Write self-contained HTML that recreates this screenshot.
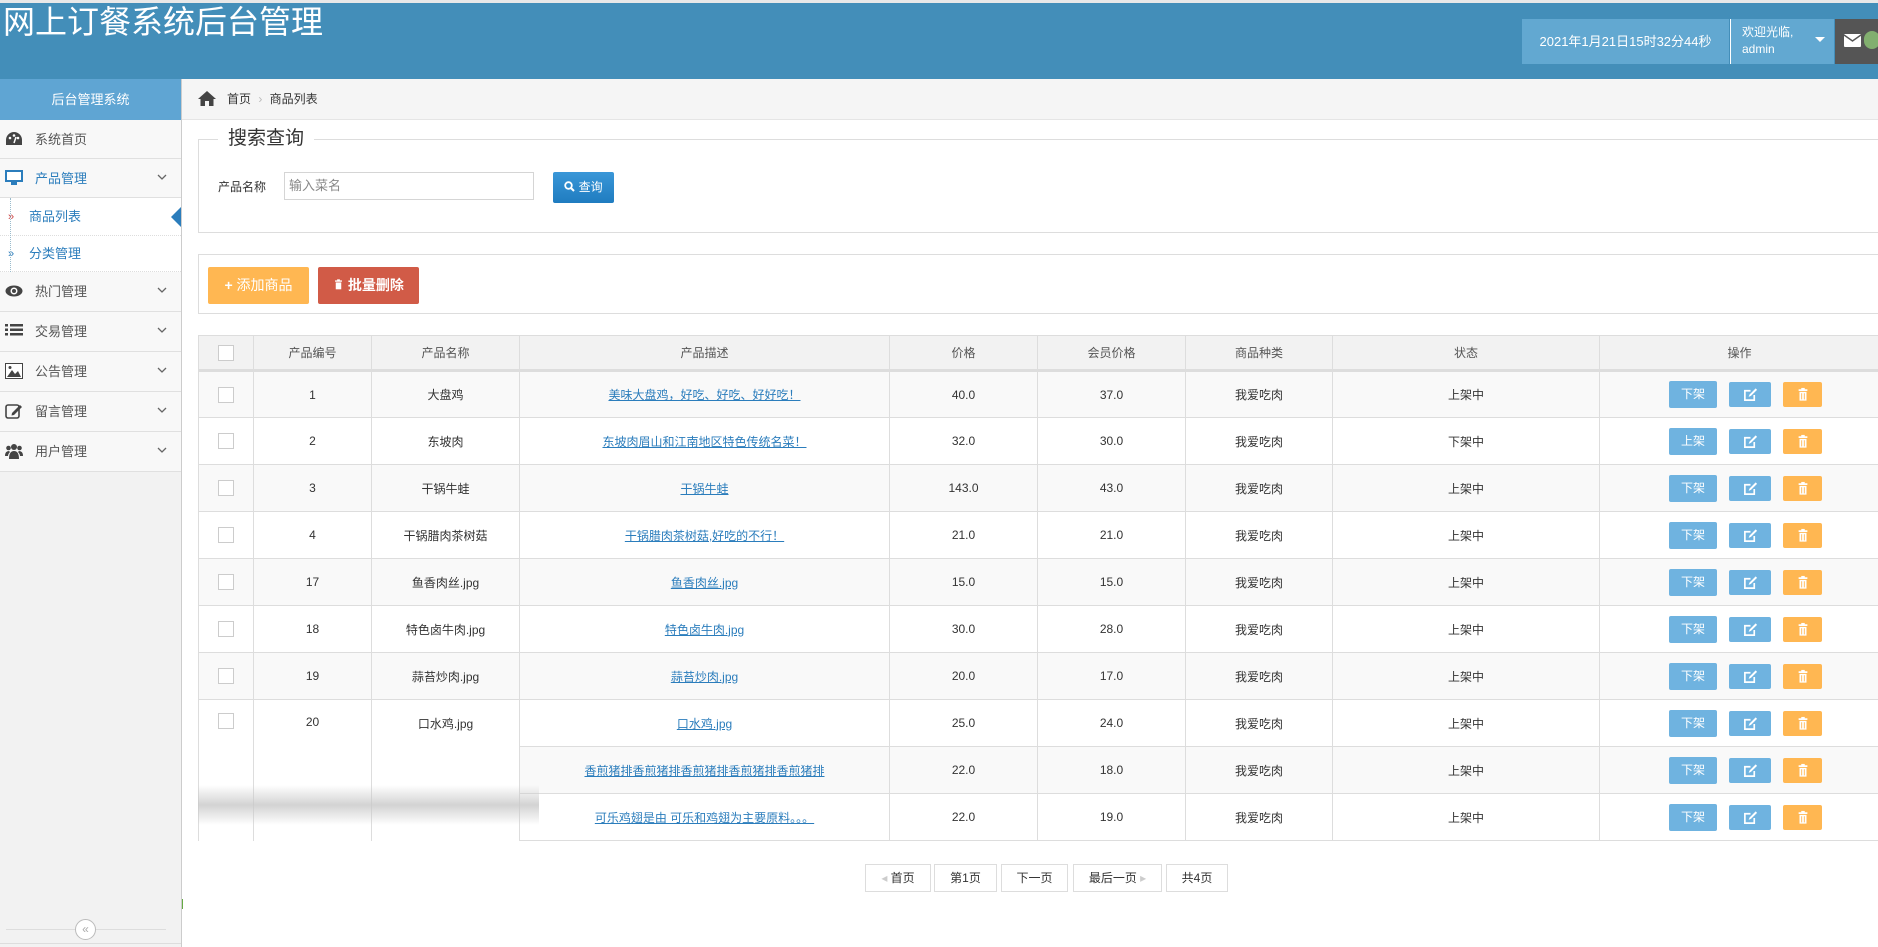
<!DOCTYPE html>
<html><head><meta charset="utf-8">
<style>
*{margin:0;padding:0;box-sizing:border-box}
body{width:1878px;height:947px;overflow:hidden;background:#fff;font-family:"Liberation Sans","Noto Sans CJK SC",sans-serif;font-size:13px;color:#333;position:relative}
.a{position:absolute}
#hd{left:0;top:0;width:1878px;height:79px;background:#438eb9;border-top:3px solid #e8e8e8}
#title{left:3px;top:2px;color:#fff;font-size:32px;line-height:40px}
#side{left:0;top:79px;width:182px;height:868px;background:#f2f2f2;border-right:1px solid #ccc}
.mi{position:absolute;left:0;width:181px;height:40px;background:#f8f8f8;border-bottom:1px solid #e0e0e0;font-size:13px;line-height:39px;padding-left:35px;color:#555}
.mi .ic{position:absolute;left:5px;top:11px;width:18px;height:16px}
.mi .ch{position:absolute;left:157px;top:15px;width:10px;height:7px}
.sub{position:absolute;left:0;width:181px;background:#fff;border-bottom:1px dotted #ddd;color:#2b7dbc;padding-left:29px;font-size:13px}
.sub b{position:absolute;left:8px;font-weight:normal;font-size:11px}
th,td{border:1px solid #ddd;text-align:center;font-weight:normal}
table{border-collapse:collapse;position:absolute;left:198px;top:335px;width:1681px;table-layout:fixed}
th{height:35px;background:#f2f2f2;color:#555;font-size:12px;border-bottom:3px solid #ddd}
td{height:47px;font-size:12px;color:#333}
td.op{padding-left:12px}
tr.o td{background:#f9f9f9}
td a{color:#2b7dbc;text-decoration:underline}
.cb{display:inline-block;width:16px;height:16px;border:1px solid #ccc;background:#fff;vertical-align:middle}
.btn{display:inline-block;height:27px;line-height:27px;color:#fff;font-size:12px;border-radius:2px;vertical-align:middle}
.b1{width:48px;background:#6fb3e0;margin-right:12px}
.b2{width:42px;height:25px;background:#6fb3e0;margin-right:12px;padding-top:5px;line-height:0}
.b3{width:39px;height:25px;background:#ffb752;padding-top:5px;line-height:0}
.pg{position:absolute;top:864px;height:28px;border:1px solid #ddd;font-size:12px;line-height:26px;text-align:center;color:#333}
</style></head><body>
<svg width="0" height="0" style="position:absolute"><defs>
<symbol id="ed" viewBox="0 0 16 16"><path d="M12 8.5V14H2V4h6" fill="none" stroke="#fff" stroke-width="1.8"/><path d="M6 10.5 L7 8 L13.5 1.5 L15 3 L8.5 9.5z" fill="#fff"/></symbol>
<symbol id="tr" viewBox="0 0 16 16"><rect x="3" y="2" width="10" height="2" fill="#fff"/><rect x="6" y="0.5" width="4" height="2" fill="#fff"/><path d="M4 5h8v10H4z" fill="#fff"/><path d="M6.5 6.5v7M9.5 6.5v7" stroke="#ffb752" stroke-width="1"/></symbol>
<symbol id="cv" viewBox="0 0 10 7"><path d="M1 1 L5 5 L9 1" fill="none" stroke="#666" stroke-width="1.3"/></symbol>
</defs></svg>
<div id="hd" class="a"></div>
<div id="title" class="a">网上订餐系统后台管理</div>
<div class="a" style="left:1522px;top:19px;width:207px;height:45px;background:#62a8d1;color:#fff;font-size:13px;line-height:45px;text-align:center">2021年1月21日15时32分44秒</div>
<div class="a" style="left:1730px;top:19px;width:104px;height:45px;background:#62a8d1;border-left:1px solid #fff;color:#fff;font-size:12px;padding:5px 0 0 11px;line-height:17px">欢迎光临,<br>admin<span class="a" style="left:84px;top:18px;border:5px solid transparent;border-top-color:#fff"></span></div>
<div class="a" style="left:1835px;top:19px;width:43px;height:45px;background:#555"><svg class="a" style="left:9px;top:15px" width="17" height="13"><rect width="17" height="13" rx="1" fill="#fff"/><path d="M0 1 L8.5 7 L17 1" stroke="#555" stroke-width="1.5" fill="none"/></svg><div class="a" style="left:29px;top:12px;width:16px;height:18px;border-radius:9px;background:#82af6f"></div></div>

<div id="side" class="a">
<div class="a" style="left:0;top:0;width:181px;height:41px;background:#5fa5d3;color:#fff;text-align:center;line-height:41px;font-size:13px">后台管理系统</div>
<div class="mi" style="top:41px;height:39px"><svg class="ic" viewBox="0 0 18 16"><path d="M9 1A8 8 0 0 0 1 9v5h16V9A8 8 0 0 0 9 1z" fill="#444"/><circle cx="5" cy="7" r="1.3" fill="#fff"/><circle cx="9" cy="4.5" r="1.3" fill="#fff"/><circle cx="13" cy="7" r="1.3" fill="#fff"/><path d="M9 12 L11 6" stroke="#fff" stroke-width="1.5"/></svg>系统首页</div>
<div class="mi" style="top:80px;height:39px;color:#2b7dbc"><svg class="ic" viewBox="0 0 18 16"><rect x="0" y="0" width="18" height="12" fill="#2b7dbc"/><rect x="2" y="2" width="14" height="8" fill="#fff"/><rect x="6" y="12" width="6" height="3" fill="#2b7dbc"/></svg>产品管理<svg class="ch"><use href="#cv"/></svg></div>
<div class="sub" style="top:119px;height:38px;line-height:38px;background:#fff"><b style="color:#c44">»</b>商品列表<span class="a" style="left:171px;top:9px;border:10px solid transparent;border-right-color:#2b7dbc;border-left-width:0"></span></div>
<div class="sub" style="top:157px;height:36px;line-height:36px"><b style="color:#2b7dbc">»</b>分类管理</div>
<div class="a" style="left:10px;top:119px;height:74px;border-left:1px dotted #9bc"></div>
<div class="mi" style="top:193px"><svg class="ic" viewBox="0 0 18 16"><ellipse cx="9" cy="8" rx="8.5" ry="5.5" fill="#444"/><circle cx="9" cy="8" r="3.5" fill="#fff"/><circle cx="9" cy="8" r="2" fill="#444"/></svg>热门管理<svg class="ch"><use href="#cv"/></svg></div>
<div class="mi" style="top:233px"><svg class="ic" viewBox="0 0 18 16"><g fill="#444"><rect x="0" y="1" width="3" height="2.5"/><rect x="5" y="1" width="13" height="2.5"/><rect x="0" y="5.5" width="3" height="2.5"/><rect x="5" y="5.5" width="13" height="2.5"/><rect x="0" y="10" width="3" height="2.5"/><rect x="5" y="10" width="13" height="2.5"/></g></svg>交易管理<svg class="ch"><use href="#cv"/></svg></div>
<div class="mi" style="top:273px"><svg class="ic" viewBox="0 0 18 16"><rect x="0.5" y="0.5" width="17" height="15" fill="#fff" stroke="#444"/><path d="M2 14 L7 7 L10 11 L13 8 L16 14z" fill="#444"/><circle cx="5" cy="4.5" r="1.5" fill="#444"/></svg>公告管理<svg class="ch"><use href="#cv"/></svg></div>
<div class="mi" style="top:313px"><svg class="ic" viewBox="0 0 18 16"><rect x="1" y="2" width="13" height="13" rx="2" fill="none" stroke="#444" stroke-width="1.6"/><path d="M7 10 L15 2 L17 4 L9 12 L6.5 12.5z" fill="#444"/></svg>留言管理<svg class="ch"><use href="#cv"/></svg></div>
<div class="mi" style="top:353px"><svg class="ic" viewBox="0 0 18 16"><g fill="#444"><circle cx="9" cy="4" r="3"/><circle cx="3.5" cy="5" r="2.3"/><circle cx="14.5" cy="5" r="2.3"/><path d="M4 16 Q4 8 9 8 Q14 8 14 16z"/><path d="M0 13 Q0 8 4 8 L5 9 Q3 11 3 13z"/><path d="M18 13 Q18 8 14 8 L13 9 Q15 11 15 13z"/></g></svg>用户管理<svg class="ch"><use href="#cv"/></svg></div>
<div class="a" style="left:6px;top:850px;width:160px;border-top:1px solid #ddd"></div>
<div class="a" style="left:75px;top:840px;width:21px;height:21px;border:1px solid #bbb;border-radius:50%;background:#fff;color:#aaa;font-size:12px;line-height:18px;text-align:center">«</div>
<div class="a" style="left:0;top:864px;width:181px;border-top:1px solid #ddd"></div>
</div>

<div class="a" style="left:182px;top:79px;width:1696px;height:41px;background:#f5f5f5;border-bottom:1px solid #e5e5e5"></div>
<svg class="a" style="left:198px;top:91px" width="18" height="15" viewBox="0 0 18 15"><path d="M9 0 L18 8 L15.5 8 L15.5 15 L11 15 L11 10 L7 10 L7 15 L2.5 15 L2.5 8 L0 8z" fill="#444"/></svg>
<div class="a" style="left:227px;top:90px;font-size:12px;color:#333">首页 <span style="color:#bbb;margin:0 4px">›</span> 商品列表</div>

<div class="a" style="left:198px;top:139px;width:1680px;height:94px;border:1px solid #ddd;border-right:none"></div>
<div class="a" style="left:218px;top:124px;background:#fff;padding:0 10px;font-size:19px;color:#333;line-height:30px">搜索查询</div>
<div class="a" style="left:218px;top:178px;font-size:12px">产品名称</div>
<div class="a" style="left:284px;top:172px;width:250px;height:28px;border:1px solid #d5d5d5;font-size:13px;color:#888;line-height:26px;padding-left:4px">输入菜名</div>
<div class="a" style="left:553px;top:172px;width:61px;height:31px;border-radius:2px;color:#fff;font-size:12px;line-height:31px;text-align:center;background:linear-gradient(#3a97d8,#1f7cc0)"><svg width="11" height="11" style="vertical-align:-1px"><circle cx="4.5" cy="4.5" r="3.3" stroke="#fff" stroke-width="1.8" fill="none"/><path d="M7 7L10 10" stroke="#fff" stroke-width="2"/></svg> 查询</div>

<div class="a" style="left:198px;top:254px;width:1680px;height:60px;border:1px solid #ddd;border-right:none"></div>
<div class="a" style="left:208px;top:267px;width:101px;height:37px;background:#ffb752;border-radius:2px;color:#fff;font-size:14px;line-height:37px;text-align:center"><b>+</b> 添加商品</div>
<div class="a" style="left:318px;top:267px;width:101px;height:37px;background:#d15b47;border-radius:2px;color:#fff;font-size:14px;line-height:37px;text-align:center;font-weight:bold"><svg width="11" height="13" viewBox="0 0 16 16" style="vertical-align:-1px"><rect x="3" y="2" width="10" height="2" fill="#fff"/><rect x="6" y="0.5" width="4" height="2" fill="#fff"/><path d="M4 5h8v10H4z" fill="#fff"/></svg> 批量删除</div>

<table>
<colgroup><col style="width:55px"><col style="width:118px"><col style="width:148px"><col style="width:370px"><col style="width:148px"><col style="width:148px"><col style="width:147px"><col style="width:267px"><col style="width:280px"></colgroup>
<tr><th><span class="cb"></span></th><th>产品编号</th><th>产品名称</th><th>产品描述</th><th>价格</th><th>会员价格</th><th>商品种类</th><th>状态</th><th>操作</th></tr>
<tr class="o"><td><span class="cb"></span></td><td>1</td><td>大盘鸡</td><td><a>美味大盘鸡，好吃、好吃、好好吃！</a></td><td>40.0</td><td>37.0</td><td>我爱吃肉</td><td>上架中</td><td class="op"><span class="btn b1">下架</span><span class="btn b2"><svg width="15" height="15"><use href="#ed"/></svg></span><span class="btn b3"><svg width="14" height="15"><use href="#tr"/></svg></span></td></tr>
<tr><td><span class="cb"></span></td><td>2</td><td>东坡肉</td><td><a>东坡肉眉山和江南地区特色传统名菜！</a></td><td>32.0</td><td>30.0</td><td>我爱吃肉</td><td>下架中</td><td class="op"><span class="btn b1">上架</span><span class="btn b2"><svg width="15" height="15"><use href="#ed"/></svg></span><span class="btn b3"><svg width="14" height="15"><use href="#tr"/></svg></span></td></tr>
<tr class="o"><td><span class="cb"></span></td><td>3</td><td>干锅牛蛙</td><td><a>干锅牛蛙</a></td><td>143.0</td><td>43.0</td><td>我爱吃肉</td><td>上架中</td><td class="op"><span class="btn b1">下架</span><span class="btn b2"><svg width="15" height="15"><use href="#ed"/></svg></span><span class="btn b3"><svg width="14" height="15"><use href="#tr"/></svg></span></td></tr>
<tr><td><span class="cb"></span></td><td>4</td><td>干锅腊肉茶树菇</td><td><a>干锅腊肉茶树菇,好吃的不行！</a></td><td>21.0</td><td>21.0</td><td>我爱吃肉</td><td>上架中</td><td class="op"><span class="btn b1">下架</span><span class="btn b2"><svg width="15" height="15"><use href="#ed"/></svg></span><span class="btn b3"><svg width="14" height="15"><use href="#tr"/></svg></span></td></tr>
<tr class="o"><td><span class="cb"></span></td><td>17</td><td>鱼香肉丝.jpg</td><td><a>鱼香肉丝.jpg</a></td><td>15.0</td><td>15.0</td><td>我爱吃肉</td><td>上架中</td><td class="op"><span class="btn b1">下架</span><span class="btn b2"><svg width="15" height="15"><use href="#ed"/></svg></span><span class="btn b3"><svg width="14" height="15"><use href="#tr"/></svg></span></td></tr>
<tr><td><span class="cb"></span></td><td>18</td><td>特色卤牛肉.jpg</td><td><a>特色卤牛肉.jpg</a></td><td>30.0</td><td>28.0</td><td>我爱吃肉</td><td>上架中</td><td class="op"><span class="btn b1">下架</span><span class="btn b2"><svg width="15" height="15"><use href="#ed"/></svg></span><span class="btn b3"><svg width="14" height="15"><use href="#tr"/></svg></span></td></tr>
<tr class="o"><td><span class="cb"></span></td><td>19</td><td>蒜苔炒肉.jpg</td><td><a>蒜苔炒肉.jpg</a></td><td>20.0</td><td>17.0</td><td>我爱吃肉</td><td>上架中</td><td class="op"><span class="btn b1">下架</span><span class="btn b2"><svg width="15" height="15"><use href="#ed"/></svg></span><span class="btn b3"><svg width="14" height="15"><use href="#tr"/></svg></span></td></tr>
<tr><td rowspan="3" style="vertical-align:top;padding-top:13px;border-bottom:none"><span class="cb"></span></td><td rowspan="3" style="vertical-align:top;padding-top:15px;border-bottom:none">20</td><td rowspan="3" style="vertical-align:top;padding-top:15px;border-bottom:none">口水鸡.jpg</td><td><a>口水鸡.jpg</a></td><td>25.0</td><td>24.0</td><td>我爱吃肉</td><td>上架中</td><td class="op"><span class="btn b1">下架</span><span class="btn b2"><svg width="15" height="15"><use href="#ed"/></svg></span><span class="btn b3"><svg width="14" height="15"><use href="#tr"/></svg></span></td></tr>
<tr class="o"><td><a>香煎猪排香煎猪排香煎猪排香煎猪排香煎猪排</a></td><td>22.0</td><td>18.0</td><td>我爱吃肉</td><td>上架中</td><td class="op"><span class="btn b1">下架</span><span class="btn b2"><svg width="15" height="15"><use href="#ed"/></svg></span><span class="btn b3"><svg width="14" height="15"><use href="#tr"/></svg></span></td></tr>
<tr><td><a>可乐鸡翅是由 可乐和鸡翅为主要原料。。。</a></td><td>22.0</td><td>19.0</td><td>我爱吃肉</td><td>上架中</td><td class="op"><span class="btn b1">下架</span><span class="btn b2"><svg width="15" height="15"><use href="#ed"/></svg></span><span class="btn b3"><svg width="14" height="15"><use href="#tr"/></svg></span></td></tr>
</table>
<div class="a" style="left:198px;top:785px;width:341px;height:40px;background:linear-gradient(rgba(255,255,255,0),rgba(200,200,200,0.8) 50%,rgba(255,255,255,0))"></div>

<div class="pg" style="left:865px;width:66px"><span style="color:#ccc">◂</span> 首页</div>
<div class="pg" style="left:934px;width:63px">第1页</div>
<div class="pg" style="left:1001px;width:67px">下一页</div>
<div class="pg" style="left:1073px;width:89px">最后一页 <span style="color:#ccc">▸</span></div>
<div class="pg" style="left:1166px;width:62px">共4页</div>
<div class="a" style="left:182px;top:899px;width:1px;height:10px;background:#6a4"></div>
</body></html>
